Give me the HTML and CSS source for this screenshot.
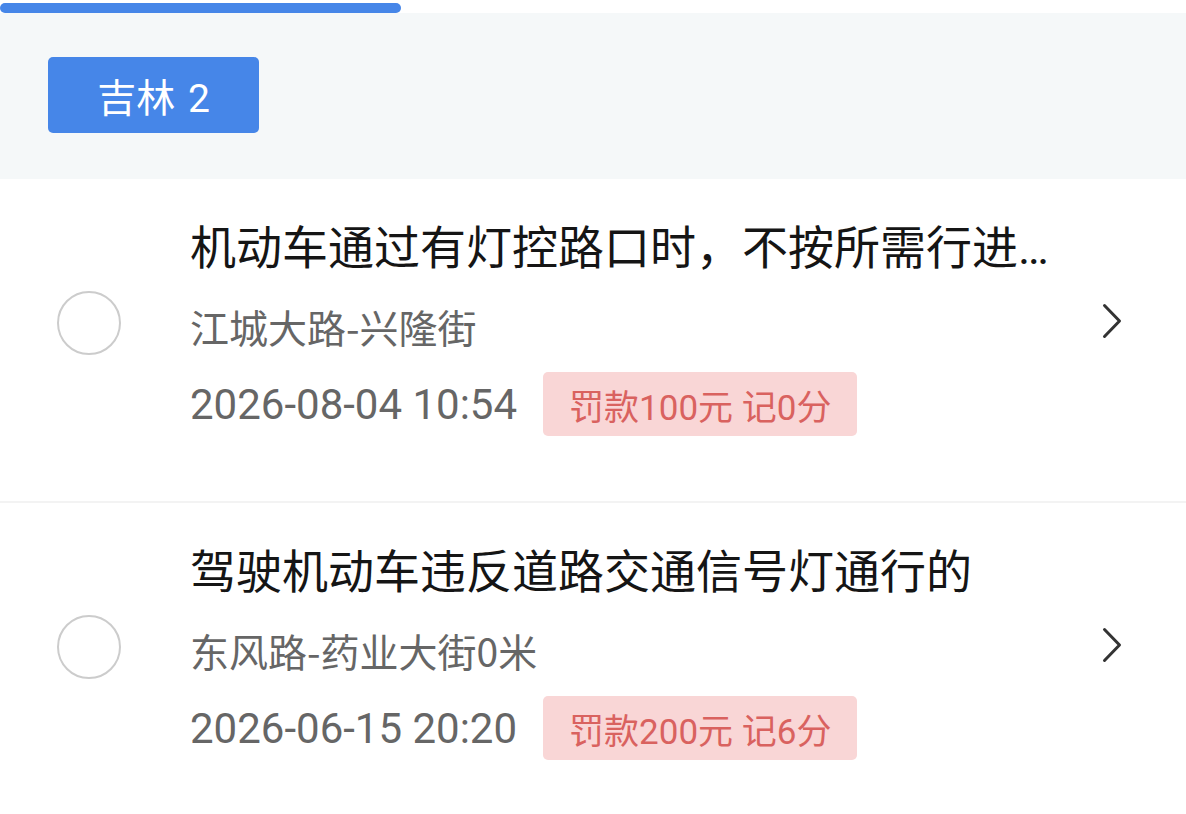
FILE: index.html
```html
<!DOCTYPE html>
<html lang="zh-CN">
<head>
<meta charset="utf-8">
<title>违章列表</title>
<link rel="stylesheet" href="styles.css">
</head>
<body>
<div class="progress"><div class="progress-bar"></div></div>
<div class="region">
  <span class="badge">吉林 2</span>
</div>
<div class="list">
  <div class="item">
    <span class="radio"></span>
    <div class="info">
      <div class="title">机动车通过有灯控路口时，不按所需行进方向驶入导向车道的</div>
      <div class="addr">江城大路-兴隆街</div>
      <div class="meta">
        <span class="time">2026-08-04 10:54</span>
        <span class="tag">罚款100元 记0分</span>
      </div>
    </div>
    <svg class="chev" viewBox="0 0 20 36" width="20" height="36"><path d="M2.5 2.5 L17.5 18 L2.5 33.5" fill="none" stroke="#333" stroke-width="3" stroke-linecap="round" stroke-linejoin="round"/></svg>
  </div>
  <div class="item">
    <span class="radio"></span>
    <div class="info">
      <div class="title">驾驶机动车违反道路交通信号灯通行的</div>
      <div class="addr">东风路-药业大街0米</div>
      <div class="meta">
        <span class="time">2026-06-15 20:20</span>
        <span class="tag">罚款200元 记6分</span>
      </div>
    </div>
    <svg class="chev" viewBox="0 0 20 36" width="20" height="36"><path d="M2.5 2.5 L17.5 18 L2.5 33.5" fill="none" stroke="#333" stroke-width="3" stroke-linecap="round" stroke-linejoin="round"/></svg>
  </div>
</div>
</body>
</html>
```

FILE: styles.css
```css
* { box-sizing: border-box; }
html, body {
  margin: 0;
  padding: 0;
  background: #fff;
  font-family: Roboto, "Noto Sans CJK SC", sans-serif;
}
.progress {
  height: 13px;
  padding-top: 3px;
  background: #fff;
}
.progress-bar {
  width: 401px;
  height: 10px;
  border-radius: 5px;
  background: #4686e8;
}
.region {
  background: #f5f8f9;
  height: 166px;
  padding: 44px 0 0 48px;
}
.badge {
  display: inline-flex;
  align-items: center;
  justify-content: center;
  width: 211px;
  height: 76px;
  border-radius: 5px;
  background: #4686e8;
  color: #fff;
  font-size: 39px;
  word-spacing: 3px;
}
.item {
  display: flex;
  align-items: center;
  padding: 43px 64px 65px 57px;
  border-bottom: 2px solid #f3f3f3;
}
.radio {
  flex: none;
  width: 64px;
  height: 64px;
  border-radius: 50%;
  border: 2.5px solid #cccccc;
  margin-bottom: 12px;
}
.info {
  flex: none;
  width: 880px;
  margin-left: 69px;
  margin-right: 32px;
  min-width: 0;
}
.title {
  font-size: 46px;
  line-height: 52px;
  color: #151515;
  white-space: nowrap;
  overflow: hidden;
  text-overflow: ellipsis;
}
.addr {
  margin-top: 26px;
  font-size: 39px;
  line-height: 52px;
  color: #666;
  font-family: "Noto Sans CJK SC", sans-serif;
}
.meta {
  margin-top: 20px;
  display: flex;
  align-items: center;
  gap: 26px;
  height: 64px;
}
.time {
  font-size: 42px;
  color: #666;
}
.tag {
  display: inline-flex;
  align-items: center;
  height: 64px;
  padding: 0 26px;
  border-radius: 5px;
  background: #f9d6d6;
  color: #d9625f;
  font-size: 35px;
}
.chev {
  flex: none;
  display: block;
  margin-bottom: 16px;
}
```
